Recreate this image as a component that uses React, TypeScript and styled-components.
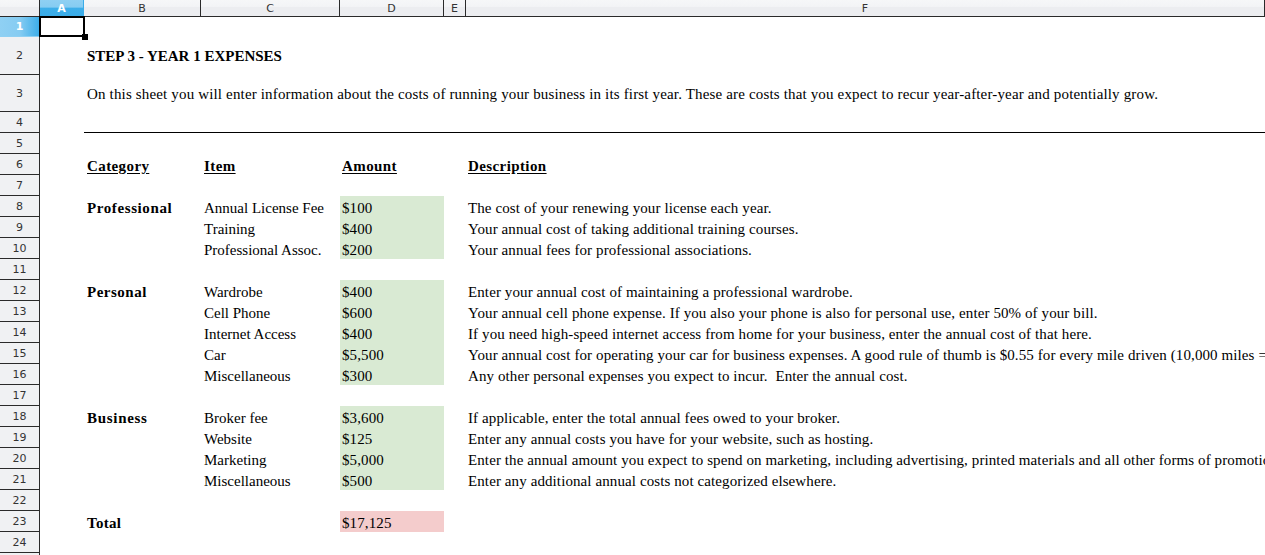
import React from "react";
import styled, { createGlobalStyle, css } from "styled-components";

const Global = createGlobalStyle`
  html, body { margin: 0; padding: 0; background: #fff; overflow: hidden; }
  #root { width: 1265px; height: 555px; overflow: hidden; }
`;

const COLS = "40px 44px 117px 139px 104px 22px 1fr";
const CELL_FONT = `"Liberation Serif", "DejaVu Serif", serif`;

const Sheet = styled.div`
  position: relative;
  width: 1265px;
  height: 555px;
  overflow: hidden;
  display: flex;
  flex-direction: column;
`;

const HeaderRow = styled.div`
  display: grid;
  grid-template-columns: ${COLS};
  height: 17px;
  flex: none;
`;

const ColHeader = styled.div<{ $active?: boolean }>`
  box-sizing: border-box;
  display: flex;
  align-items: center;
  justify-content: center;
  font-family: "DejaVu Sans", sans-serif;
  font-size: 11px;
  color: #333;
  border-bottom: 1px solid #2a2a2a;
  border-right: 1px solid #2a2a2a;
  background: linear-gradient(#f6f7f8 0%, #f3f4f6 40%, #ecedf0 45%, #ecedf0 100%);
  ${(p) =>
    p.$active &&
    css`
      background: linear-gradient(#8fd0f3 0%, #86ccf2 45%, #3eaee9 50%, #3aace8 100%);
      color: #fff;
      font-weight: bold;
      border-right-color: #3aace8;
    `}
`;

const Row = styled.div<{ $h: number }>`
  display: grid;
  grid-template-columns: ${COLS};
  height: ${(p) => p.$h}px;
  flex: none;
`;

const RowHeader = styled.div<{ $active?: boolean }>`
  box-sizing: border-box;
  display: flex;
  align-items: center;
  justify-content: center;
  font-family: "DejaVu Sans", sans-serif;
  font-size: 11px;
  color: #333;
  background: #f0f1f3;
  border-right: 1px solid #2a2a2a;
  border-bottom: 1px solid #2a2a2a;
  ${(p) =>
    p.$active &&
    css`
      background: linear-gradient(90deg, #8fd0f3 0%, #86ccf2 50%, #3eaee9 100%);
      color: #fff;
      font-weight: bold;
      border-bottom-color: #8fd0f3;
    `}
`;

const Cell = styled.div<{
  $fill?: string;
  $bold?: boolean;
  $under?: boolean;
  $rule?: boolean;
  $mid?: boolean;
  $pad?: number;
  $spacing?: number;
}>`
  box-sizing: border-box;
  position: relative;
  display: flex;
  align-items: ${(p) => (p.$mid ? "center" : "flex-end")};
  padding: ${(p) => (p.$mid ? `1px 0 0 ${p.$pad ?? 3}px` : `0 0 0 ${p.$pad ?? 3}px`)};
  white-space: nowrap;
  overflow: visible;
  font-family: ${CELL_FONT};
  font-size: 15px;
  letter-spacing: ${(p) => (p.$spacing !== undefined ? p.$spacing : p.$bold ? 0.4 : 0.12)}px;
  color: #000;
  background: ${(p) => p.$fill || "transparent"};
  font-weight: ${(p) => (p.$bold ? 700 : 400)};
  text-decoration: ${(p) => (p.$under ? "underline" : "none")};
  text-underline-offset: 2px;
  border-bottom: ${(p) => (p.$rule ? "1px solid #000" : "none")};
  z-index: 1;
`;

const CursorBox = styled.div`
  position: absolute;
  left: 39px;
  top: 16px;
  width: 46px;
  height: 21px;
  box-sizing: border-box;
  border: 2px solid #000;
  z-index: 5;
  pointer-events: none;
`;

const CursorHandle = styled.div`
  position: absolute;
  right: -5px;
  bottom: -5px;
  width: 6px;
  height: 6px;
  background: #000;
`;

const GREEN = "#d9ead3";
const PINK = "#f4cccc";

type RowData = {
  h: number;
  b?: string;
  c?: string;
  d?: string;
  f?: string;
  bold?: boolean;
  under?: boolean;
  fill?: string;
  rule?: boolean;
  mid?: boolean;
  bBold?: boolean;
  bSpacing?: number;
};

const rows: RowData[] = [
  { h: 20 },
  { h: 38, b: "STEP 3 - YEAR 1 EXPENSES", bBold: true, mid: true, bSpacing: 0 },
  {
    h: 37,
    b: "On this sheet you will enter information about the costs of running your business in its first year. These are costs that you expect to recur year-after-year and potentially grow.",
    mid: true,
    bSpacing: 0.16,
  },
  { h: 21, rule: true },
  { h: 21 },
  { h: 21, b: "Category", c: "Item", d: "Amount", f: "Description", bold: true, under: true },
  { h: 21 },
  { h: 21, b: "Professional", bBold: true, bSpacing: 0.6, c: "Annual License Fee", d: "$100", fill: GREEN, f: "The cost of your renewing your license each year." },
  { h: 21, c: "Training", d: "$400", fill: GREEN, f: "Your annual cost of taking additional training courses." },
  { h: 21, c: "Professional Assoc.", d: "$200", fill: GREEN, f: "Your annual fees for professional associations." },
  { h: 21 },
  { h: 21, b: "Personal", bBold: true, bSpacing: 0.5, c: "Wardrobe", d: "$400", fill: GREEN, f: "Enter your annual cost of maintaining a professional wardrobe." },
  { h: 21, c: "Cell Phone", d: "$600", fill: GREEN, f: "Your annual cell phone expense. If you also your phone is also for personal use, enter 50% of your bill." },
  { h: 21, c: "Internet Access", d: "$400", fill: GREEN, f: "If you need high-speed internet access from home for your business, enter the annual cost of that here." },
  { h: 21, c: "Car", d: "$5,500", fill: GREEN, f: "Your annual cost for operating your car for business expenses. A good rule of thumb is $0.55 for every mile driven (10,000 miles = $5,500)." },
  { h: 21, c: "Miscellaneous", d: "$300", fill: GREEN, f: "Any other personal expenses you expect to incur.\u00a0 Enter the annual cost." },
  { h: 21 },
  { h: 21, b: "Business", bBold: true, bSpacing: 0.7, c: "Broker fee", d: "$3,600", fill: GREEN, f: "If applicable, enter the total annual fees owed to your broker." },
  { h: 21, c: "Website", d: "$125", fill: GREEN, f: "Enter any annual costs you have for your website, such as hosting." },
  { h: 21, c: "Marketing", d: "$5,000", fill: GREEN, f: "Enter the annual amount you expect to spend on marketing, including advertising, printed materials and all other forms of promotion." },
  { h: 21, c: "Miscellaneous", d: "$500", fill: GREEN, f: "Enter any additional annual costs not categorized elsewhere." },
  { h: 21 },
  { h: 21, b: "Total", bBold: true, bSpacing: 0.3, d: "$17,125", fill: PINK },
  { h: 21 },
  { h: 21 },
];

const colLetters = ["A", "B", "C", "D", "E", "F"];

export default function App() {
  return (
    <>
      <Global />
      <Sheet>
        <HeaderRow>
          <ColHeader />
          {colLetters.map((l) => (
            <ColHeader key={l} $active={l === "A"}>
              {l}
            </ColHeader>
          ))}
        </HeaderRow>
        {rows.map((r, i) => (
          <Row key={i} $h={r.h}>
            <RowHeader $active={i === 0}>{i + 1}</RowHeader>
            <Cell />
            <Cell
              $bold={r.bold || r.bBold}
              $under={r.under}
              $rule={r.rule}
              $mid={r.mid}
              $spacing={r.bSpacing}
            >
              {r.b}
            </Cell>
            <Cell $bold={r.bold} $under={r.under} $rule={r.rule} $spacing={r.bold ? undefined : 0}>
              {r.c}
            </Cell>
            <Cell $bold={r.bold} $under={r.under} $rule={r.rule} $fill={r.fill} $pad={2}>
              {r.d}
            </Cell>
            <Cell $rule={r.rule} />
            <Cell $bold={r.bold} $under={r.under} $rule={r.rule} $pad={2} $spacing={r.bold ? undefined : 0.1}>
              {r.f}
            </Cell>
          </Row>
        ))}
        <CursorBox>
          <CursorHandle />
        </CursorBox>
      </Sheet>
    </>
  );
}
